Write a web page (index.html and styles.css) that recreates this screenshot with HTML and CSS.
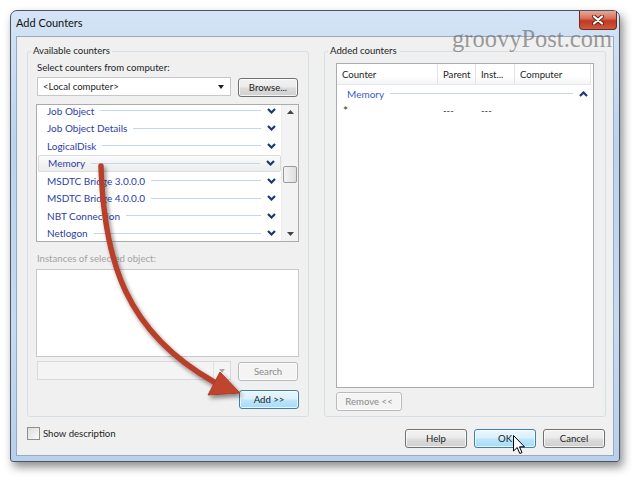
FILE: index.html
```html
<!DOCTYPE html>
<html lang="en">
  <head>
    <meta charset="UTF-8" />
    <title>Add Counters</title>
    <link rel="stylesheet" href="styles.css">
  </head>
  <body>
    <div class="window">
      <div class="titlebar">
        <span class="title">Add Counters</span>
        <div class="close">
          <svg width="14" height="10" viewBox="0 0 14 10">
            <path d="M3 1.5 L11 8.5 M11 1.5 L3 8.5" stroke="#5a2218" stroke-width="4" stroke-linecap="round" />
            <path d="M3 1.5 L11 8.5 M11 1.5 L3 8.5" stroke="#fff" stroke-width="2.2" stroke-linecap="round" />
          </svg>
        </div>
      </div>
      <div class="client">
        <div class="groups">
          <!-- left side -->
          <div class="group group-left">
            <div class="group-title">Available counters</div>
            <div class="label">Select counters from computer:</div>
            <div class="row">
              <div class="combo">&lt;Local computer&gt;<span class="combo-arrow"></span></div>
              <div class="btn">Browse...</div>
            </div>
            <div class="objects">
              <div class="objects-view">
                <div class="objects-items">
                  <div class="obj"><span>Job Object</span><i class="line"></i><svg class="chev" viewBox="0 0 9 6"><path d="M1 1 L4.5 4.5 L8 1" /></svg></div>
                  <div class="obj"><span>Job Object Details</span><i class="line"></i><svg class="chev" viewBox="0 0 9 6"><path d="M1 1 L4.5 4.5 L8 1" /></svg></div>
                  <div class="obj"><span>LogicalDisk</span><i class="line"></i><svg class="chev" viewBox="0 0 9 6"><path d="M1 1 L4.5 4.5 L8 1" /></svg></div>
                  <div class="obj hot"><span>Memory</span><i class="line"></i><svg class="chev" viewBox="0 0 9 6"><path d="M1 1 L4.5 4.5 L8 1" /></svg></div>
                  <div class="obj"><span>MSDTC Bridge 3.0.0.0</span><i class="line"></i><svg class="chev" viewBox="0 0 9 6"><path d="M1 1 L4.5 4.5 L8 1" /></svg></div>
                  <div class="obj"><span>MSDTC Bridge 4.0.0.0</span><i class="line"></i><svg class="chev" viewBox="0 0 9 6"><path d="M1 1 L4.5 4.5 L8 1" /></svg></div>
                  <div class="obj"><span>NBT Connection</span><i class="line"></i><svg class="chev" viewBox="0 0 9 6"><path d="M1 1 L4.5 4.5 L8 1" /></svg></div>
                  <div class="obj"><span>Netlogon</span><i class="line"></i><svg class="chev" viewBox="0 0 9 6"><path d="M1 1 L4.5 4.5 L8 1" /></svg></div>
                </div>
              </div>
              <div class="scrollbar">
                <svg class="sb-arrow" viewBox="0 0 7 4"><path d="M0 4 L3.5 0 L7 4 Z" /></svg>
                <div class="sb-track"><div class="sb-thumb"></div></div>
                <svg class="sb-arrow" viewBox="0 0 7 4"><path d="M0 0 L3.5 4 L7 0 Z" /></svg>
              </div>
            </div>
            <div class="label label-disabled">Instances of selected object:</div>
            <div class="instances"></div>
            <div class="row">
              <div class="combo combo-disabled"><span class="combo-btn"><span class="combo-arrow"></span></span></div>
              <div class="btn btn-disabled">Search</div>
            </div>
            <div class="row row-end">
              <div class="btn btn-default">Add &gt;&gt;</div>
            </div>
          </div>

          <!-- right side -->
          <div class="group group-right">
            <div class="group-title">Added counters</div>
            <div class="added">
              <div class="added-head">
                <span class="col col-counter">Counter</span>
                <span class="col col-parent">Parent</span>
                <span class="col col-inst">Inst...</span>
                <span class="col col-comp">Computer</span>
              </div>
              <div class="obj obj-open"><span>Memory</span><i class="line"></i><svg class="chev" viewBox="0 0 9 6"><path d="M1 5 L4.5 1.5 L8 5" /></svg></div>
              <div class="added-row">
                <span class="col col-counter star">*</span>
                <span class="col col-parent">---</span>
                <span class="col col-inst">---</span>
                <span class="col col-comp"></span>
              </div>
            </div>
            <div class="row">
              <div class="btn btn-disabled btn-remove">Remove &lt;&lt;</div>
            </div>
          </div>
        </div>

        <div class="footer">
          <div class="check"><span class="check-box"></span>Show description</div>
          <div class="buttons">
            <div class="btn">Help</div>
            <div class="btn btn-default">OK</div>
            <div class="btn">Cancel</div>
          </div>
        </div>
      </div>
    </div>

    <div class="watermark">groovyPost.com</div>

    <svg class="arrow" viewBox="0 0 640 483" width="640" height="483">
      <defs>
        <filter id="shade" x="-20%" y="-20%" width="140%" height="140%">
          <feGaussianBlur in="SourceAlpha" stdDeviation="2" />
          <feOffset dx="2" dy="3" />
          <feComponentTransfer><feFuncA type="linear" slope="0.45" /></feComponentTransfer>
          <feMerge><feMergeNode /><feMergeNode in="SourceGraphic" /></feMerge>
        </filter>
      </defs>
      <g filter="url(#shade)">
        <path d="M101 166 C 104 262, 126 332, 214 382" fill="none" stroke="#b8402a" stroke-width="5.5" stroke-linecap="round" />
        <path d="M220 372 L240 393 L208 395 Z" fill="#bf452d" stroke="#b03c27" stroke-width="1" stroke-linejoin="round" />
      </g>
    </svg>

    <svg class="cursor" width="13" height="20" viewBox="0 0 13 20">
      <path d="M0.5 0.5 L0.5 16 L4.2 12.5 L6.8 18.5 L9 17.5 L6.5 11.8 L11.5 11.8 Z" fill="#fff" stroke="#000" stroke-width="1" stroke-linejoin="round" />
    </svg>
  </body>
</html>
```

FILE: styles.css
```css
body {
  margin: 0;
  background: #fff;
  font-family: 'Lato', 'Liberation Sans', sans-serif;
  font-size: 9.6px;
  color: #1e1e1e;
  position: relative;
  width: 640px;
  height: 483px;
  overflow: hidden;
}
.window {
  margin: 10px 0 0 10px;
  width: 610px;
  height: 452px;
  box-sizing: border-box;
  border: 1px solid #4a5566;
  border-radius: 7px 7px 3px 3px;
  padding: 0 5px 5px 5px;
  background: linear-gradient(180deg, #d4e4f6 0%, #bcd3ec 30%, #c6daf0 70%, #b9d0ea 100%);
  box-shadow: 3px 5px 10px rgba(0, 0, 0, 0.45);
}
.titlebar {
  height: 25px;
  display: flex;
  justify-content: space-between;
  align-items: flex-start;
}
.title {
  font-size: 11px;
  margin-top: 5px;
  color: #111;
}
.close {
  width: 38px;
  height: 19px;
  margin-right: -3px;
  box-sizing: border-box;
  border: 1px solid #6a2c22;
  border-top: 0;
  border-radius: 0 0 4px 4px;
  background: linear-gradient(180deg, #e9a998 0%, #d8735d 40%, #c2391f 55%, #cd5a3f 100%);
  display: flex;
  align-items: center;
  justify-content: center;
}
.client {
  height: 420px;
  box-sizing: border-box;
  border: 1px solid #97aac3;
  background: #f0f0f0;
  padding: 14px 7px 0 10px;
}
.groups {
  display: flex;
  gap: 15px;
}
.group {
  width: 282px;
  height: 366px;
  box-sizing: border-box;
  border: 1px solid #d5dfe5;
  border-radius: 3px;
  display: flex;
  flex-direction: column;
}
.group-left {
  padding: 0 9px;
}
.group-right {
  padding: 0 11px;
}
.group-title {
  align-self: flex-start;
  margin-top: -8px;
  line-height: 14px;
  padding: 0 2px;
  background: #f0f0f0;
}
.group-left .group-title {
  margin-left: -6px;
}
.group-right .group-title {
  margin-left: -8px;
}
.label {
  line-height: 14px;
  margin-top: 3px;
}
.label-disabled {
  color: #a3a3a3;
  margin-top: 10px;
}
.row {
  display: flex;
  gap: 7px;
  margin-top: 2px;
}
.combo {
  width: 194px;
  height: 19px;
  box-sizing: border-box;
  border: 1px solid #c7c7c7;
  background: #fff;
  display: flex;
  align-items: center;
  justify-content: space-between;
  padding: 0 6px 0 5px;
}
.combo-arrow {
  width: 0;
  height: 0;
  border-left: 3.5px solid transparent;
  border-right: 3.5px solid transparent;
  border-top: 4px solid #222;
}
.combo-disabled {
  background: #f4f4f4;
  border-color: #d9d9d9;
  justify-content: flex-end;
  padding: 0;
}
.combo-btn {
  width: 16px;
  height: 100%;
  border-left: 1px solid #e2e2e2;
  display: flex;
  align-items: center;
  justify-content: center;
}
.combo-disabled .combo-arrow {
  border-top-color: #a8a8a8;
}
.btn {
  width: 60px;
  height: 19px;
  box-sizing: border-box;
  border: 1px solid #707070;
  border-radius: 3px;
  background: linear-gradient(180deg, #f2f2f2 0%, #ebebeb 48%, #dddddd 52%, #cfcfcf 100%);
  box-shadow: inset 0 0 0 1px rgba(255, 255, 255, 0.75);
  display: flex;
  align-items: center;
  justify-content: center;
  margin-top: 1px;
}
.btn-default {
  border-color: #3c7fb1;
  background: linear-gradient(180deg, #eaf6fd 0%, #d9f0fc 48%, #bee6fd 52%, #a7d9f5 100%);
}
.btn-disabled {
  border-color: #b7babc;
  background: #f4f4f4;
  color: #8a8a8a;
}
.objects {
  height: 138px;
  margin-top: 7px;
  margin-left: -1px;
  box-sizing: border-box;
  border: 1px solid #a8abb0;
  background: #fff;
  display: flex;
}
.objects-view {
  flex: 1;
  overflow: hidden;
}
.objects-items {
  margin-top: -3px;
}
.obj {
  height: 17.5px;
  box-sizing: border-box;
  display: flex;
  align-items: center;
  padding-left: 10px;
  color: #2b3ea6;
  font-size: 10px;
}
.obj .line {
  flex: 1;
  height: 1px;
  background: #c6d4ec;
  margin-left: 6px;
}
.chev {
  width: 9px;
  height: 6px;
  margin: 0 5px 0 6px;
  fill: none;
  stroke: #1d3870;
  stroke-width: 2.2;
}
.hot {
  border: 1px solid #dcdcdc;
  border-radius: 2px;
  background: linear-gradient(180deg, #fbfbfb 0%, #ececec 100%);
  margin-left: 1px;
  padding-left: 9px;
}
.scrollbar {
  width: 16px;
  background: #f3f3f3;
  border-left: 1px solid #ececec;
  display: flex;
  flex-direction: column;
  align-items: center;
}
.sb-arrow {
  width: 7px;
  height: 4px;
  fill: #444;
  margin: 5px 0;
}
.sb-track {
  flex: 1;
  align-self: stretch;
}
.sb-thumb {
  margin: 47px 1px 0 1px;
  height: 17px;
  box-sizing: border-box;
  border: 1px solid #9a9a9a;
  border-radius: 2px;
  background: linear-gradient(90deg, #f4f4f4, #dedede);
}
.instances {
  height: 88px;
  margin-top: 3px;
  margin-left: -1px;
  box-sizing: border-box;
  border: 1px solid #c9c9c9;
  background: #fff;
}
.instances + .row {
  margin-top: 4px;
}
.row-end {
  justify-content: flex-end;
}
.row + .row-end {
  margin-top: 8px;
}
.added {
  height: 325px;
  margin-top: 5px;
  box-sizing: border-box;
  border: 1px solid #a8abb0;
  background: #fff;
}
.added-head {
  height: 20px;
  display: flex;
  align-items: center;
  background: linear-gradient(180deg, #fff 0%, #fff 60%, #f3f4f6 100%);
  border-bottom: 1px solid #e5e7ea;
  margin-right: 2px;
}
.col {
  box-sizing: border-box;
  padding-left: 5px;
  height: 100%;
  display: flex;
  align-items: center;
}
.added-head .col {
  border-right: 1px solid #e2e4e8;
}
.col-counter {
  width: 101px;
}
.col-parent {
  width: 38px;
}
.col-inst {
  width: 39px;
}
.col-comp {
  width: 76px;
}
.obj-open {
  height: 17px;
  color: #3a5cc8;
}
.added-row {
  height: 17px;
  display: flex;
  color: #333;
}
.added-row .star {
  padding-left: 6px;
  font-size: 12px;
}
.btn-remove {
  width: 66px;
  margin-top: 4px;
}
.group-right .row {
  margin-top: 0;
}
.footer {
  display: flex;
  justify-content: space-between;
  align-items: flex-start;
}
.check {
  margin-top: 10px;
  display: flex;
  align-items: center;
  gap: 3px;
  line-height: 13px;
}
.check-box {
  width: 13px;
  height: 13px;
  box-sizing: border-box;
  border: 1px solid #8f8f8f;
  background: linear-gradient(135deg, #dcdcdc, #fbfbfb);
}
.buttons {
  display: flex;
  gap: 7px;
  margin-top: 11px;
  margin-right: 1px;
}
.buttons .btn {
  width: 62px;
}
.watermark {
  position: absolute;
  left: 452px;
  top: 27px;
  font-family: 'Liberation Serif', serif;
  font-size: 24.5px;
  line-height: 1;
  color: rgba(96, 96, 96, 0.62);
}
.arrow {
  position: absolute;
  left: 0;
  top: 0;
  pointer-events: none;
}
.cursor {
  position: absolute;
  left: 513px;
  top: 435px;
}
```
